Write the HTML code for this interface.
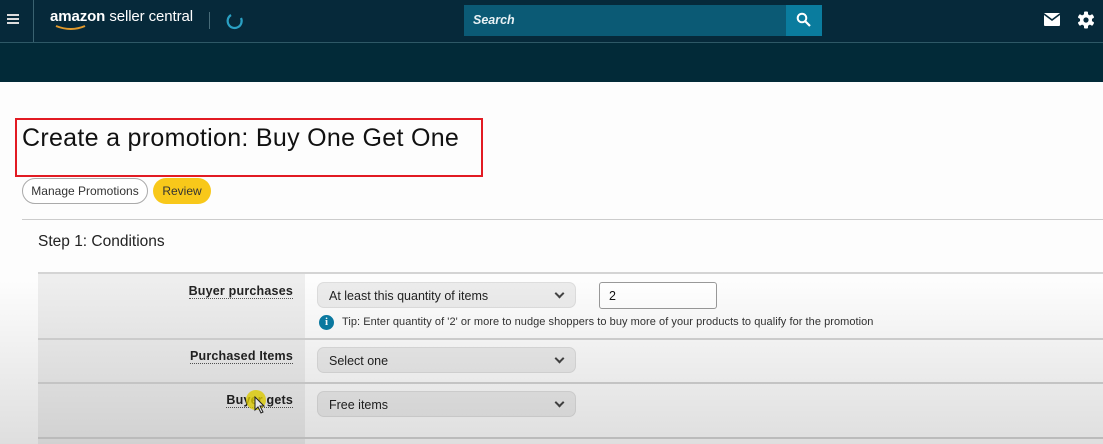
<!DOCTYPE html>
<html><head><meta charset="utf-8"><style>
*{margin:0;padding:0;box-sizing:border-box}
body{width:1103px;height:444px;overflow:hidden;background:#fdfdfd;font-family:"Liberation Sans",sans-serif;position:relative;color:#111}
.abs{position:absolute}
.top{left:0;top:0;width:1103px;height:42px;background:#06293a}
.top2{left:0;top:42px;width:1103px;height:40px;background:#022a38;border-top:1px solid #2e5866}
.sel{position:absolute;height:26px;width:259px;background:#ececec;border:1px solid #ddd;border-radius:7px;font-size:12.5px;color:#222;padding:6px 0 0 11px}
.sel:after{content:"";position:absolute;right:12px;top:7px;width:5px;height:5px;border-right:2px solid #444;border-bottom:2px solid #444;transform:rotate(45deg)}
.lbl{position:absolute;right:0;font-weight:bold;font-size:12.5px;color:#222;border-bottom:1px dotted #555;line-height:14px;letter-spacing:0.2px}
.hr{position:absolute;left:38px;width:1065px;height:2px;background:#d4d4d4}
</style></head><body>
<div class="abs top"></div>
<div class="abs top2"></div>
<div class="abs" style="left:7px;top:14px;width:12px;height:2px;background:#ddd;box-shadow:0 4px #ddd,0 8px #ddd"></div>
<div class="abs" style="left:33px;top:0;width:1px;height:42px;background:#3a6270"></div>
<div class="abs" style="left:50px;top:8px;color:#fff;font-size:15px;letter-spacing:-0.1px"><b>amazon</b> seller central</div>
<svg class="abs" style="left:55px;top:24px" width="34" height="8"><path d="M1 2 Q16 8 30 2" stroke="#e29a2c" stroke-width="2" fill="none"/></svg>
<div class="abs" style="left:209px;top:12px;width:1px;height:17px;background:#476b78"></div>
<svg class="abs" style="left:225px;top:11px" width="20" height="20"><path d="M6 4 A7 7 0 1 0 16 7" stroke="#2aa0c3" stroke-width="2.2" fill="none"/></svg>
<div class="abs" style="left:464px;top:5px;width:322px;height:31px;background:#0b5a75"></div>
<div class="abs" style="left:473px;top:13px;color:#e8f1f4;font-size:12.5px;font-style:italic;font-weight:bold">Search</div>
<div class="abs" style="left:786px;top:5px;width:36px;height:31px;background:#0a7c9e"></div>
<svg class="abs" style="left:796px;top:12px" width="16" height="16"><circle cx="6" cy="6" r="4.3" stroke="#fff" stroke-width="2" fill="none"/><path d="M9 9 L14 14" stroke="#fff" stroke-width="2.2"/></svg>
<svg class="abs" style="left:1044px;top:13px" width="16" height="13"><rect width="16" height="13" rx="1" fill="#fff"/><path d="M0 1 L8 7 L16 1" stroke="#06293a" stroke-width="1.6" fill="none"/></svg>
<svg class="abs" style="left:1077px;top:11px" width="18" height="18" viewBox="0 0 18 18"><g fill="#fff"><circle cx="9" cy="9" r="6"/><rect x="7" y="0.5" width="4" height="17" rx="1"/><rect x="7" y="0.5" width="4" height="17" rx="1" transform="rotate(60 9 9)"/><rect x="7" y="0.5" width="4" height="17" rx="1" transform="rotate(120 9 9)"/></g><circle cx="9" cy="9" r="2.6" fill="#06293a"/></svg>

<div class="abs" style="left:15px;top:118px;width:468px;height:59px;border:2px solid #e21b23"></div>
<div class="abs" style="left:22px;top:124px;font-size:25px;color:#111;letter-spacing:0.3px">Create a promotion: Buy One Get One</div>
<div class="abs" style="left:22px;top:178px;width:126px;height:26px;border:1px solid #aaa;border-radius:13px;font-size:12px;color:#333;text-align:center;line-height:24px;background:#fff">Manage Promotions</div>
<div class="abs" style="left:153px;top:178px;width:58px;height:26px;background:#f8c81a;border-radius:13px;font-size:12px;color:#333;text-align:center;line-height:26px">Review</div>
<div class="abs" style="left:22px;top:219px;width:1081px;height:1px;background:#ccc"></div>
<div class="abs" style="left:38px;top:233px;font-size:15.5px;color:#222">Step 1: Conditions</div>

<div class="abs" style="left:38px;top:273px;width:267px;height:171px;background:#eeeeee"></div>
<div class="hr" style="top:272px"></div>
<div class="hr" style="top:338px"></div>
<div class="hr" style="top:382px"></div>
<div class="hr" style="top:437px"></div>
<div class="abs" style="left:38px;top:284px;width:255px;height:20px"><span class="lbl">Buyer purchases</span></div>
<div class="abs" style="left:38px;top:349px;width:255px;height:20px"><span class="lbl">Purchased Items</span></div>
<div class="abs" style="left:38px;top:393px;width:255px;height:20px"><span class="lbl">Buyer gets</span></div>
<div class="sel" style="left:317px;top:282px">At least this quantity of items</div>
<div class="abs" style="left:599px;top:282px;width:118px;height:27px;border:1px solid #999;border-radius:3px;background:#fff;font-size:12.5px;padding:6px 0 0 9px">2</div>
<div class="abs" style="left:319px;top:315px;width:15px;height:15px;border-radius:50%;background:#0a7ca4;color:#fff;font-size:11px;font-weight:bold;text-align:center;line-height:15px;font-family:'Liberation Serif',serif">i</div>
<div class="abs" style="left:342px;top:316px;font-size:11px;color:#333;letter-spacing:0.05px">Tip: Enter quantity of '2' or more to nudge shoppers to buy more of your products to qualify for the promotion</div>
<div class="sel" style="left:317px;top:347px">Select one</div>
<div class="sel" style="left:317px;top:391px">Free items</div>
<div class="abs" style="left:246px;top:390px;width:20px;height:20px;border-radius:50%;background:rgba(240,220,0,0.8)"></div>
<svg class="abs" style="left:254px;top:396px" width="12" height="18"><path d="M1 1 L1 14 L4 11 L7 17 L9 16 L6 10 L10 10 Z" fill="#fff" stroke="#222"/></svg>
<div class="abs" style="left:0;top:280px;width:1103px;height:164px;background:linear-gradient(rgba(0,0,0,0),rgba(0,0,0,0.12))"></div>
</body></html>
